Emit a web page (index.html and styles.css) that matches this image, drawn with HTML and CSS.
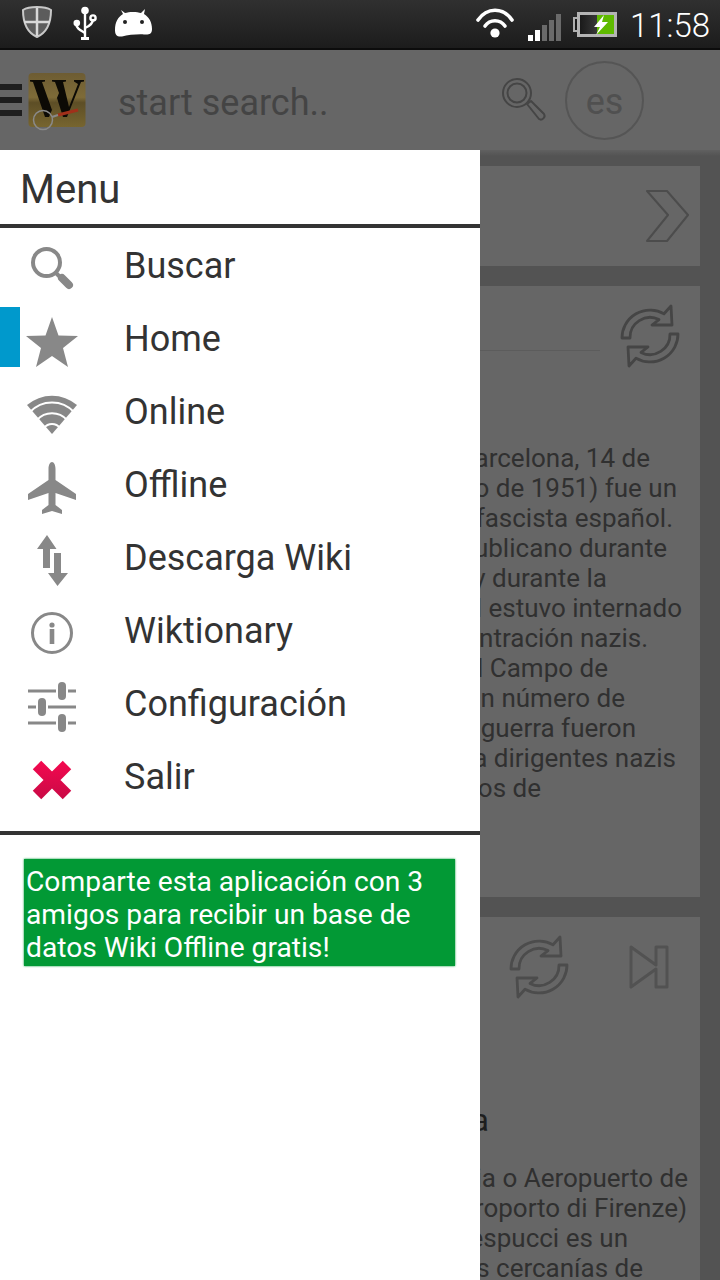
FILE: index.html
```html
<!DOCTYPE html>
<html lang="es">
<head>
    <meta charset="UTF-8">
    <title>Wiki Offline</title>
    <link rel="stylesheet" href="styles.css">
</head>
<body>
<div class="phone">
    <div class="statusbar">
        <svg class="st-shield" width="30" height="32" viewBox="0 0 30 32">
            <path d="M15 1C21 1 26 2 29 4C29 15 26 26 15 31C4 26 1 15 1 4C4 2 9 1 15 1Z" fill="#5c5c5c" stroke="#c8c8c8" stroke-width="2"/>
            <path d="M15 2V30M2 16H28" stroke="#d8d8d8" stroke-width="2.5"/>
        </svg>
        <svg class="st-usb" width="24" height="34" viewBox="0 0 24 34">
            <g fill="none" stroke="#fff" stroke-width="2.4">
                <path d="M12 6V32"/>
                <path d="M3 18C4 23 7 24 12 27"/>
                <path d="M20 13C20 18 17 20 12 22"/>
                <circle cx="20" cy="12" r="2.6"/>
            </g>
            <circle cx="12" cy="4.5" r="3.8" fill="#fff"/>
            <circle cx="3.8" cy="17" r="3.3" fill="#fff"/>
            <rect x="8" y="31" width="8" height="3" fill="#fff"/>
        </svg>
        <svg class="st-android" width="38" height="28" viewBox="0 0 38 28">
            <path d="M1 21C1 13 4 8 9 5L7 1L11 4C15 2.500 23 2.500 27 4L31 0L30 5C35 8 38 13 38 20C38 25 35 26 30 25.500C24 25 14 26 8 27.500C3 28 1 26 1 21Z" fill="#fff"/>
            <circle cx="11" cy="13" r="2" fill="#222"/>
            <circle cx="28" cy="13" r="2" fill="#222"/>
        </svg>
        <svg class="st-wifi" width="38" height="32" viewBox="0 0 38 32">
            <g fill="none" stroke="#fff" stroke-width="3.6" stroke-linecap="round">
                <path d="M2 12C11 -1 27 -1 36 12"/>
                <path d="M9 18C14 11 24 11 29 18"/>
            </g>
            <circle cx="19" cy="25" r="4.600" fill="#fff"/>
        </svg>
        <div class="st-signal">
            <span class="bar b1"></span>
            <span class="bar b2"></span>
            <span class="bar b3"></span>
            <span class="bar b4"></span>
            <span class="bar b5"></span>
        </div>
        <div class="st-battery">
            <div class="batt-tip"></div>
            <div class="batt-body">
                <div class="batt-fill"></div>
                <svg class="batt-bolt" width="20" height="20" viewBox="0 0 20 20">
                    <path d="M13 0L3 12H9L5 20L17 7H11Z" fill="#fff"/>
                </svg>
            </div>
        </div>
        <div class="st-clock">11:58</div>
    </div>

    <div class="toolbar">
        <div class="hamburger"><span></span><span></span><span></span></div>
        <svg class="logo" width="58" height="58" viewBox="0 0 58 58">
            <defs>
                <linearGradient id="gold" x1="0" y1="0" x2="0" y2="1">
                    <stop offset="0" stop-color="#6d5c33"/>
                    <stop offset="0.45" stop-color="#7e6b38"/>
                    <stop offset="0.55" stop-color="#5d4e26"/>
                    <stop offset="1" stop-color="#77652f"/>
                </linearGradient>
            </defs>
            <rect x="0.500" y="0" width="57" height="54" rx="4" fill="url(#gold)"/>
            <path d="M2 7H17V8.500L14 9L24 37L31 20L27 9L24 8.500V7H38V8.500L35 9L41 34L50 11L46 8.500V7H56V8.500L53 9L39 44H35L29 25L21 44H17L5 9L2 8.500Z" fill="#0c0a05"/>
            <path d="M30 42L50 37" stroke="#a0301a" stroke-width="3"/>
            <path d="M24 44L30 42" stroke="#888" stroke-width="2"/>
            <circle cx="15" cy="47" r="9.500" fill="none" stroke="#8a8a8a" stroke-width="1.500"/>
        </svg>
        <div class="search-hint">start search..</div>
        <svg class="tb-search" width="46" height="46" viewBox="0 0 46 46">
            <g fill="none" stroke="#454545" stroke-width="2">
                <circle cx="16" cy="16" r="14"/>
                <circle cx="16" cy="16" r="9.500"/>
                <path d="M26 27L30 24L43 37C45 40 41 44 38 42Z" stroke-linejoin="round"/>
            </g>
        </svg>
        <div class="lang">es</div>
    </div>
    <div class="toolbar-shadow"></div>

    <div class="content">
        <div class="card card-nav">
            <svg width="44" height="54" viewBox="0 0 44 54">
                <path d="M1 2H21L42 26L21 52H1L22 26Z" fill="none" stroke="#4c4c4c" stroke-width="2" stroke-linejoin="round"/>
            </svg>
        </div>

        <div class="card card-article">
            <div class="card-head">
                <div class="rule"></div>
                <svg class="refresh" width="60" height="64" viewBox="0 0 60 64">
                    <g fill="none" stroke="#454545" stroke-width="2.800" stroke-linejoin="round">
                        <path d="M2 34A28 28 0 0 1 44 9.800L51 2L52 21H32L39 15.600A20 20 0 0 0 10 34Z"/>
                        <path d="M2 34A28 28 0 0 1 44 9.800L51 2L52 21H32L39 15.600A20 20 0 0 0 10 34Z" transform="rotate(180 30 32)"/>
                    </g>
                </svg>
            </div>
            <div class="article-text boix">
                <div>Barcelona, 14 de</div>
                <div>julio de 1951) fue un</div>
                <div>antifascista español.</div>
                <div>republicano durante</div>
                <div>y durante la</div>
                <div>Mundial estuvo internado</div>
                <div>concentración nazis.</div>
                <div>el Campo de</div>
                <div>un número de</div>
                <div>la guerra fueron</div>
                <div>a dirigentes nazis</div>
                <div>Juicios de</div>
            </div>
        </div>

        <div class="card card-article">
            <div class="card-head card-head-end">
                <svg class="refresh" width="60" height="64" viewBox="0 0 60 64">
                    <g fill="none" stroke="#4c4c4c" stroke-width="2.800" stroke-linejoin="round">
                        <path d="M2 34A28 28 0 0 1 44 9.800L51 2L52 21H32L39 15.600A20 20 0 0 0 10 34Z"/>
                        <path d="M2 34A28 28 0 0 1 44 9.800L51 2L52 21H32L39 15.600A20 20 0 0 0 10 34Z" transform="rotate(180 30 32)"/>
                    </g>
                </svg>
                <svg class="next" width="40" height="44" viewBox="0 0 40 44">
                    <path d="M2 2L27 20V2H38V42H27V24L2 42Z" fill="none" stroke="#525252" stroke-width="3" stroke-linejoin="round"/>
                </svg>
            </div>
            <div class="article-title">Florencia</div>
            <div class="article-text airport">
                <div>Florencia o Aeropuerto de</div>
                <div>Aeroporto di Firenze)</div>
                <div>Vespucci es un</div>
                <div>las cercanías de</div>
            </div>
        </div>
    </div>

    <div class="drawer">
        <div class="drawer-title">Menu</div>
        <ul class="menu">
            <li>
                <svg class="menu-icon" viewBox="0 0 60 60" width="60" height="60">
                    <circle cx="24.500" cy="26.500" r="13.500" fill="none" stroke="#888" stroke-width="4"/>
                    <path d="M34 37L39 42" stroke="#888" stroke-width="4"/>
                    <path d="M40 42L47 49" stroke="#888" stroke-width="8" stroke-linecap="round"/>
                </svg>
                <span>Buscar</span>
            </li>
            <li class="active">
                <svg class="menu-icon" viewBox="0 0 60 60" width="60" height="60">
                    <polygon points="30,8 36.500,26.500 56,27 41,39 46,58 30,47 14,58 19,39 4,27 23.500,26.500" fill="#888"/>
                </svg>
                <span>Home</span>
            </li>
            <li>
                <svg class="menu-icon" viewBox="0 0 60 60" width="60" height="60">
                    <path d="M30 52L5 23A38.500 38.500 0 0 1 55 23Z" fill="#888"/>
                    <g fill="none" stroke="#fff" stroke-width="2">
                        <path d="M8 30A30 30 0 0 1 52 30"/>
                        <path d="M15 38A20 20 0 0 1 45 38"/>
                        <path d="M22 46A10 10 0 0 1 38 46"/>
                    </g>
                </svg>
                <span>Online</span>
            </li>
            <li>
                <svg class="menu-icon" viewBox="0 0 60 60" width="60" height="60">
                    <path d="M30 7C32 7 33.500 10 33.500 14V25L54 39V45L33.500 38V50L40 55V59L30 56L20 59V55L26.500 50V38L6 45V39L26.500 25V14C26.500 10 28 7 30 7Z" fill="#888"/>
                </svg>
                <span>Offline</span>
            </li>
            <li>
                <svg class="menu-icon" viewBox="0 0 60 60" width="60" height="60">
                    <path d="M25 7L34.500 21H28V40H21V21H15Z" fill="#888"/>
                    <path d="M32 25H39V45H46L35.500 58L26 45H32Z" fill="#888"/>
                </svg>
                <span>Descarga Wiki</span>
            </li>
            <li>
                <svg class="menu-icon" viewBox="0 0 60 60" width="60" height="60">
                    <circle cx="30" cy="32" r="19.500" fill="none" stroke="#888" stroke-width="3"/>
                    <circle cx="30" cy="24" r="2.600" fill="#888"/>
                    <rect x="27.700" y="28" width="4.600" height="15" fill="#888"/>
                </svg>
                <span>Wiktionary</span>
            </li>
            <li>
                <svg class="menu-icon" viewBox="0 0 60 60" width="60" height="60">
                    <g stroke="#888" stroke-width="3">
                        <path d="M6 17H34M46 17H54"/>
                        <path d="M6 33H14M26 33H54"/>
                        <path d="M6 49H34M46 49H54"/>
                    </g>
                    <g fill="#888">
                        <rect x="36" y="8" width="8" height="18" rx="4"/>
                        <rect x="16" y="24" width="8" height="18" rx="4"/>
                        <rect x="36" y="40" width="8" height="18" rx="4"/>
                    </g>
                </svg>
                <span>Configuración</span>
            </li>
            <li>
                <svg class="menu-icon" viewBox="0 0 60 60" width="60" height="60">
                    <defs>
                        <linearGradient id="pink" gradientUnits="userSpaceOnUse" x1="0" y1="14" x2="0" y2="52">
                            <stop offset="0" stop-color="#f4084f"/>
                            <stop offset="1" stop-color="#c90a46"/>
                        </linearGradient>
                    </defs>
                    <path d="M15 18L45 48M45 18L15 48" stroke="url(#pink)" stroke-width="12"/>
                </svg>
                <span>Salir</span>
            </li>
        </ul>
        <div class="drawer-share">Comparte esta aplicación con 3 amigos para recibir un base de datos Wiki Offline gratis!</div>
    </div>
</div>
</body>
</html>
```

FILE: styles.css
```css
* {
    box-sizing: border-box;
}
html, body {
    margin: 0;
    padding: 0;
}
body {
    font-family: Roboto, "Liberation Sans", sans-serif;
    background-color: #535353;
}
.phone {
    position: relative;
    width: 720px;
    height: 1280px;
    overflow: hidden;
    background-color: #535353;
}

/* status bar */
.statusbar {
    display: flex;
    align-items: center;
    height: 50px;
    padding: 0 12px 4px 22px;
    background: linear-gradient(#303030, #1c1c1c);
    border-bottom: 2px solid #0c0c0c;
}
.st-usb {
    margin-left: 21px;
    margin-top: 2px;
}
.st-android {
    margin-left: 17px;
    margin-top: 2px;
}
.st-wifi {
    margin-left: auto;
    margin-top: 4px;
}
.st-signal {
    display: flex;
    align-items: flex-end;
    gap: 2px;
    height: 27px;
    margin-left: 14px;
    margin-top: 10px;
}
.bar {
    width: 5px;
    background-color: #6a6a6a;
}
.b1 { height: 6px; background-color: #fff; }
.b2 { height: 11px; background-color: #fff; }
.b3 { height: 16px; }
.b4 { height: 21px; }
.b5 { height: 27px; }
.st-battery {
    display: flex;
    align-items: center;
    margin-left: 12px;
    margin-top: 4px;
}
.batt-tip {
    width: 4px;
    height: 15px;
    background-color: #1c1c1c;
    border: 2px solid #b0b0b0;
    border-right: none;
}
.batt-body {
    position: relative;
    display: flex;
    justify-content: flex-end;
    width: 40px;
    height: 25px;
    border: 3px solid #b4b4b4;
    background: linear-gradient(90deg, #1a1a1a, #555);
}
.batt-fill {
    width: 17px;
    background-color: #5fba00;
}
.batt-bolt {
    position: absolute;
    left: 11px;
    top: 0;
}
.st-clock {
    width: 78px;
    margin-left: 13px;
    margin-top: 8px;
    font-size: 33px;
    font-weight: 300;
    color: #fff;
    line-height: 40px;
    white-space: nowrap;
}

/* toolbar, dimmed by the open drawer */
.toolbar {
    display: flex;
    align-items: center;
    height: 100px;
    padding-right: 76px;
    background-color: #666;
}
.hamburger {
    display: flex;
    flex-direction: column;
    gap: 7px;
    width: 22px;
}
.hamburger span {
    display: block;
    height: 6px;
    background-color: #1e1e1e;
}
.logo {
    margin-left: 6px;
    margin-top: 4px;
}
.search-hint {
    flex: 1;
    margin-left: 32px;
    padding-top: 5px;
    font-size: 36px;
    color: #444;
}
.tb-search {
    margin-right: 18px;
}
.lang {
    display: flex;
    align-items: center;
    justify-content: center;
    width: 79px;
    height: 79px;
    padding-top: 3px;
    border: 2px solid #555;
    border-radius: 50%;
    font-size: 36px;
    color: #505050;
}
.toolbar-shadow {
    height: 6px;
    background: linear-gradient(#606060, #535353);
}

/* cards behind the drawer */
.content {
    display: flex;
    flex-direction: column;
    gap: 20px;
    width: 700px;
    padding-top: 10px;
}
.card {
    background-color: #666;
}
.card-nav {
    display: flex;
    align-items: center;
    justify-content: flex-end;
    height: 100px;
    padding-right: 10px;
}
.card-article:nth-child(2) {
    height: 611px;
}
.card-head {
    display: flex;
    height: 82px;
    padding: 18px 20px 0 0;
}
.card-head-end {
    justify-content: flex-end;
    padding-right: 31px;
}
.rule {
    flex: 1;
    align-self: center;
    height: 1px;
    margin: 28px 20px 0 0;
    background-color: #5c5c5c;
}
.next {
    margin-left: 60px;
    margin-top: 10px;
}
.article-title {
    margin-top: 98px;
    padding-right: 211px;
    font-size: 32px;
    line-height: 46px;
    color: #1e1e1e;
    text-align: right;
    white-space: nowrap;
}

/* only the tail of each line shows past the drawer, so lines hang from their right end */
.article-text {
    margin-top: 75px;
    font-size: 26px;
    line-height: 30px;
    color: #303030;
    text-align: right;
    white-space: nowrap;
}
.article-title + .article-text {
    margin-top: 20px;
}
.boix div:nth-child(1) { padding-right: 50px; }
.boix div:nth-child(2) { padding-right: 23px; }
.boix div:nth-child(3) { padding-right: 27px; }
.boix div:nth-child(4) { padding-right: 33px; }
.boix div:nth-child(5) { padding-right: 93px; }
.boix div:nth-child(6) { padding-right: 18px; }
.boix div:nth-child(7) { padding-right: 52px; }
.boix div:nth-child(8) { padding-right: 92px; }
.boix div:nth-child(9) { padding-right: 75px; }
.boix div:nth-child(10) { padding-right: 64px; }
.boix div:nth-child(11) { padding-right: 24px; }
.boix div:nth-child(12) { padding-right: 159px; }
.airport div:nth-child(1) { padding-right: 12px; }
.airport div:nth-child(2) { padding-right: 13px; }
.airport div:nth-child(3) { padding-right: 72px; }
.airport div:nth-child(4) { padding-right: 57px; }

/* side menu */
.drawer {
    position: absolute;
    top: 150px;
    left: 0;
    bottom: 0;
    width: 480px;
    background-color: #fff;
    color: #333;
}
.drawer-title {
    height: 78px;
    padding-left: 20px;
    border-bottom: 4px solid #333;
    font-size: 40px;
    line-height: 80px;
}
.menu {
    margin: 0;
    padding: 1px 0 0;
    list-style: none;
    height: 607px;
    border-bottom: 4px solid #333;
}
.menu li {
    position: relative;
    display: flex;
    align-items: center;
    height: 73px;
    padding-left: 22px;
    font-size: 36px;
}
.menu-icon {
    flex: none;
    margin-right: 42px;
}
.menu li.active::before {
    content: "";
    position: absolute;
    left: 0;
    top: 5px;
    width: 20px;
    height: 60px;
    background-color: #0099cc;
}
.drawer-share {
    width: 431px;
    height: 107px;
    margin: 24px 0 0 24px;
    padding: 6px 2px 0;
    background-color: #029935;
    box-shadow: 0 0 2px #029935;
    color: #fff;
    font-size: 28.2px;
    line-height: 33px;
}
```
